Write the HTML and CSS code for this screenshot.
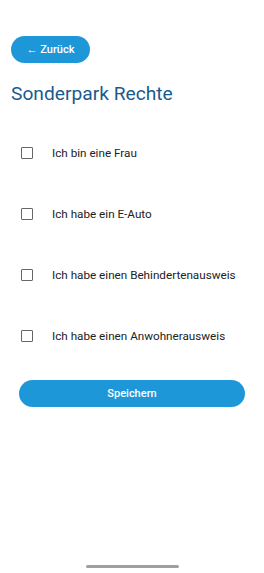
FILE: index.html
```html
<!DOCTYPE html>
<html lang="de">
<head>
<meta charset="utf-8">
<link rel="stylesheet" href="styles.css">
</head>
<body>
<div class="screen">
  <div class="top">
    <button class="back">← Zurück</button>
    <h1 class="title">Sonderpark Rechte</h1>
  </div>
  <div class="list">
    <label class="row"><span class="box"></span><span class="label">Ich bin eine Frau</span></label>
    <label class="row"><span class="box"></span><span class="label">Ich habe ein E-Auto</span></label>
    <label class="row"><span class="box"></span><span class="label">Ich habe einen Behindertenausweis</span></label>
    <label class="row"><span class="box"></span><span class="label">Ich habe einen Anwohnerausweis</span></label>
  </div>
  <button class="save">Speichern</button>
  <div class="spacer"></div>
  <div class="home"></div>
</div>
</body>
</html>
```
FILE: styles.css
```css
html, body {
  margin: 0;
  padding: 0;
  background: #fff;
}
body {
  font-family: Roboto, "Liberation Sans", sans-serif;
}
.screen {
  width: 264px;
  height: 573px;
  display: flex;
  flex-direction: column;
  box-sizing: border-box;
  padding-top: 36px;
}
.top {
  padding: 0 11px;
  display: flex;
  flex-direction: column;
  align-items: flex-start;
}
.back {
  width: 79px;
  height: 27px;
  border: none;
  border-radius: 14px;
  background: #1e97d8;
  color: #fff;
  font-family: inherit;
  font-size: 11px;
  font-weight: 500;
  padding: 0;
}
.title {
  margin: 19px 0 0;
  font-size: 19.2px;
  font-weight: 400;
  color: #1a5a8e;
  line-height: 24px;
}
.list {
  display: flex;
  flex-direction: column;
  gap: 37px;
  margin-top: 35px;
  padding-left: 21px;
}
.row {
  display: flex;
  align-items: center;
  height: 24px;
}
.box {
  width: 10px;
  height: 10px;
  border: 1.5px solid #666;
  border-radius: 1px;
  flex: none;
}
.label {
  margin-left: 19px;
  font-size: 11.7px;
  color: #222;
}
.save {
  margin: 32px 19px 0;
  height: 27px;
  border: none;
  border-radius: 14px;
  background: #1e97d8;
  color: #fff;
  font-family: inherit;
  font-size: 11px;
  font-weight: 500;
}
.spacer {
  flex: 1;
}
.home {
  align-self: center;
  width: 93px;
  height: 3px;
  border-radius: 2px;
  background: #a0a0a0;
  margin-bottom: 5px;
}
```
